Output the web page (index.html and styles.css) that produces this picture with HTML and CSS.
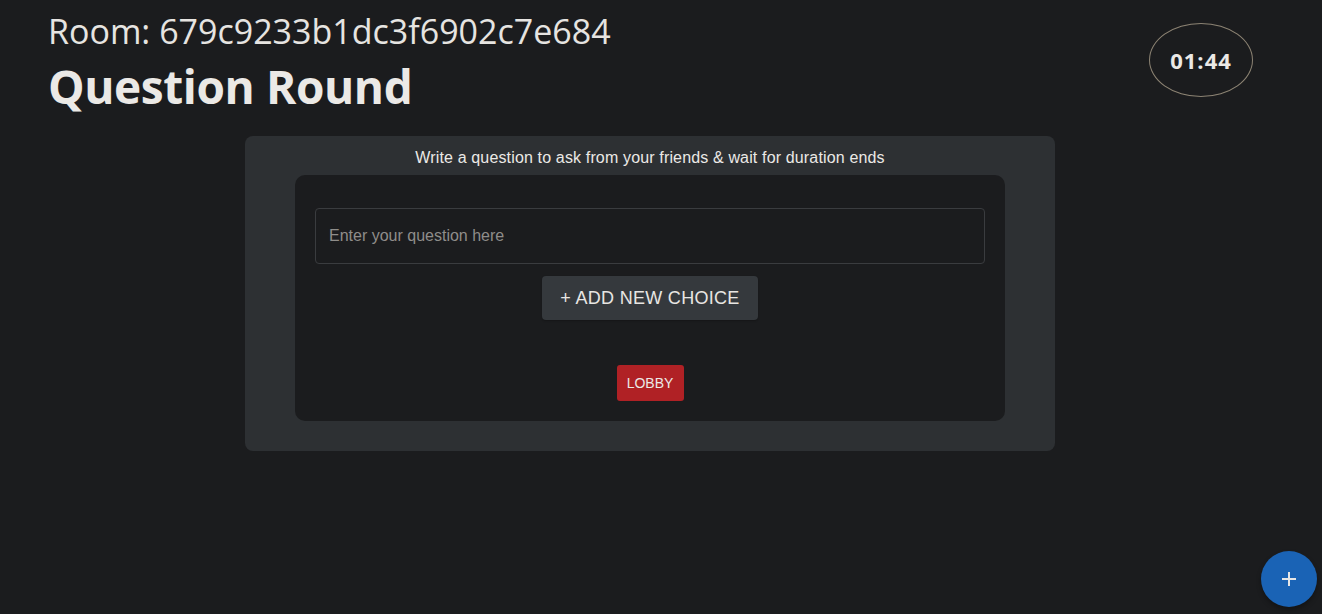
FILE: index.html
```html
<!DOCTYPE html>
<html lang="en">
<head>
<meta charset="utf-8">
<title>Question Round</title>
<link rel="stylesheet" href="styles.css">
</head>
<body>
<div class="page">
  <header class="top">
    <div class="titles">
      <div class="room">Room: 679c9233b1dc3f6902c7e684</div>
      <h1 class="round">Question Round</h1>
    </div>
    <div class="timer">01:44</div>
  </header>
  <main class="card">
    <p class="hint">Write a question to ask from your friends &amp; wait for duration ends</p>
    <div class="inner">
      <input class="question" type="text" placeholder="Enter your question here">
      <button class="add">+ Add new choice</button>
      <button class="lobby">Lobby</button>
    </div>
  </main>
</div>
<button class="fab" aria-label="add">
  <svg width="20" height="20" viewBox="0 0 20 20"><path d="M10 3v14M3 10h14" stroke="#e6e6e6" stroke-width="2"/></svg>
</button>
</body>
</html>
```
FILE: styles.css
```css
html, body {
  margin: 0;
  padding: 0;
  background: #1b1c1e;
  height: 100%;
  overflow: hidden;
}
body {
  font-family: "Liberation Sans", Arial, sans-serif;
  color: #e8e6e3;
}
.page {
  padding: 0 69px 0 48px;
}
.top {
  display: flex;
  justify-content: space-between;
  align-items: flex-start;
}
.titles {
  padding-top: 8px;
}
.room {
  font-family: "Open Sans", "Noto Sans", sans-serif;
  font-size: 34px;
  line-height: 46px;
  letter-spacing: 0;
  color: #e6e4e1;
}
.round {
  margin: 0;
  padding-top: 4px;
  font-family: "Open Sans", "Noto Sans", sans-serif;
  font-weight: 700;
  font-size: 46px;
  line-height: 56px;
  letter-spacing: -0.4px;
  color: #ebe9e6;
}
.timer {
  margin-top: 23px;
  width: 102px;
  height: 72px;
  border: 1px solid #8c8373;
  border-radius: 50%;
  display: flex;
  align-items: center;
  justify-content: center;
  font-family: "Open Sans", sans-serif;
  font-weight: 700;
  font-size: 22px;
  letter-spacing: 1px;
  color: #ebe9e6;
}
.card {
  width: 810px;
  margin: 22px 0 0 197px;
  background: #2d3033;
  border-radius: 8px;
  padding: 13px 50px 30px;
  box-sizing: border-box;
}
.hint {
  margin: 0 0 8px;
  text-align: center;
  font-size: 16px;
  line-height: 18px;
  color: #ebe9e6;
  letter-spacing: 0.15px;
}
.inner {
  background: #1b1c1e;
  border-radius: 10px;
  padding: 33px 20px 20px;
  display: flex;
  flex-direction: column;
  align-items: center;
}
.question {
  width: 100%;
  height: 56px;
  box-sizing: border-box;
  background: transparent;
  border: 1px solid #3a3c3f;
  border-radius: 4px;
  padding: 0 13px;
  font-family: "Liberation Sans", Arial, sans-serif;
  font-size: 16px;
  color: #e8e6e3;
  outline: none;
}
.question::placeholder {
  color: #8f8d8a;
}
.add {
  margin-top: 12px;
  width: 216px;
  height: 44px;
  border: none;
  border-radius: 4px;
  background: #35393d;
  color: #e8e6e3;
  font-family: "Liberation Sans", Arial, sans-serif;
  font-size: 18px;
  text-transform: uppercase;
  letter-spacing: 0.3px;
  box-shadow: 0 1px 2px rgba(0,0,0,0.25);
}
.lobby {
  margin-top: 45px;
  width: 67px;
  height: 36px;
  border: none;
  border-radius: 3px;
  background: #b02125;
  color: #ece8e6;
  font-family: "Liberation Sans", Arial, sans-serif;
  font-size: 14px;
  text-transform: uppercase;
}
.fab {
  position: fixed;
  right: 5px;
  bottom: 7px;
  width: 56px;
  height: 56px;
  border-radius: 50%;
  border: none;
  background: #1a63b5;
  display: flex;
  align-items: center;
  justify-content: center;
  padding: 0;
  box-shadow: 0 3px 5px rgba(0,0,0,0.3);
}
```
